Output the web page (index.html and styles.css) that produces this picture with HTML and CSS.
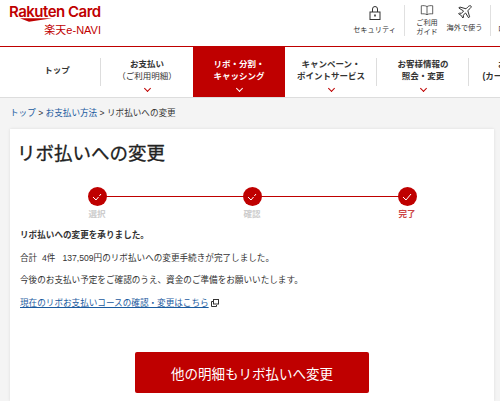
FILE: index.html
```html
<!DOCTYPE html>
<html>
<head>
	<meta charset="utf-8">
	<title>リボ払いへの変更</title>
	<link rel="stylesheet" href="styles.css">
</head>
<body>
	<header class="top">
		<div class="logo">
			<div class="logoMain">Rakuten Card</div>
			<svg class="swoosh" width="32" height="4" viewBox="0 0 32 4"><path d="M0 .3 L32 .3 L9 3.800 Z" fill="#bf0000"/></svg>
			<div class="logoSub">楽天e-NAVI</div>
		</div>
		<ul class="util">
			<li class="utilItem secure">
				<svg width="12" height="14" viewBox="0 0 12 14" fill="none" stroke="#333" stroke-width="1"><rect x="1" y="6" width="10" height="7.500"/><path d="M3.500 6V3a2.500 2.500 0 0 1 5 0v3"/><path d="M6 8.500v2" stroke-width="1.600"/></svg>
				<span>セキュリティ</span>
			</li>
			<li class="utilItem guide">
				<svg width="16" height="13" viewBox="0 0 16 13" fill="none" stroke="#333" stroke-width="1"><path d="M8 2C6 .8 3 .6 .6 1v10.600c2.400-.4 5.400-.2 7.400 1 2-1.200 5-1.400 7.400-1V1C13 .6 10 .8 8 2zM8 2v10.600"/></svg>
				<span>ご利用<br>ガイド</span>
			</li>
			<li class="utilItem abroad">
				<svg width="14" height="14" viewBox="0 0 14 14" fill="none" stroke="#333" stroke-width="1" stroke-linejoin="round"><path d="M13 1c-.8-.6-2-.2-3 .8L8 3.800 1.800 2 .8 3l4.800 3-2.200 2.400-2-.4-.8.8 2.600 1.600 1.600 2.600.8-.8-.4-2L7.600 8l3 4.800 1-1L9.800 5.600l2.200-2c1-1 1.600-2 1-2.600z"/></svg>
				<span>海外で使う</span>
			</li>
			<li class="utilItem logout">
				<span>ログアウト</span>
			</li>
		</ul>
	</header>

	<nav class="nav">
		<a class="navItem first">トップ</a>
		<a class="navItem second">お支払い<br><span class="thin">（ご利用明細）</span><i class="arrow"></i></a>
		<a class="navItem current">リボ・分割・<br>キャッシング<i class="arrow"></i></a>
		<a class="navItem">キャンペーン・<br>ポイントサービス<i class="arrow"></i></a>
		<a class="navItem">お客様情報の<br>照会・変更<i class="arrow"></i></a>
		<a class="navItem last">お申込み<br>(カード追加など)<i class="arrow"></i></a>
	</nav>

	<div class="crumb"><a href="#">トップ</a> &gt; <a href="#">お支払い方法</a> &gt; リボ払いへの変更</div>

	<main class="card">
		<h1>リボ払いへの変更</h1>
		<ol class="steps">
			<li class="step">
				<span class="dot"><svg width="10" height="8" viewBox="0 0 10 8" fill="none" stroke="#fff" stroke-width="1"><path d="M1 4l3 3 5-6"/></svg></span>
				選択
			</li>
			<li class="step">
				<span class="dot"><svg width="10" height="8" viewBox="0 0 10 8" fill="none" stroke="#fff" stroke-width="1"><path d="M1 4l3 3 5-6"/></svg></span>
				確認
			</li>
			<li class="step now">
				<span class="dot"><svg width="10" height="8" viewBox="0 0 10 8" fill="none" stroke="#fff" stroke-width="1"><path d="M1 4l3 3 5-6"/></svg></span>
				完了
			</li>
		</ol>
		<p class="lead">リボ払いへの変更を承りました。</p>
		<p>合計&nbsp; 4件&nbsp;&nbsp; 137,509円のリボ払いへの変更手続きが完了しました。</p>
		<p>今後のお支払い予定をご確認のうえ、資金のご準備をお願いいたします。</p>
		<p><a href="#">現在のリボお支払いコースの確認・変更はこちら</a>
			<svg class="ext" width="8" height="8" viewBox="0 0 8 8" fill="none" stroke="#333" stroke-width="1"><rect x="2.500" y=".5" width="5" height="4.500"/><path d="M2 2.500H.5v5h5V6"/></svg>
		</p>
		<div class="action">
			<button class="btn">他の明細もリボ払いへ変更</button>
		</div>
	</main>
</body>
</html>
```

FILE: styles.css
```css
*{
	box-sizing: border-box;
}
html,body{
	height: 401px;
	overflow: hidden;
}
body{
	margin: 0;
	background-color: #f4f4f4;
	color: #333;
	font-family: "Liberation Sans", "Noto Sans CJK JP", sans-serif;
	font-size: 8.5px;
}
ul,ol{
	list-style: none;
	margin: 0;
	padding: 0;
}
a{
	color: #1a5a9e;
	text-decoration: none;
}

/* header */
.top{
	display: flex;
	justify-content: space-between;
	height: 46px;
	background-color: #fff;
	overflow: hidden;
}
.logo{
	width: 92px;
	margin-left: 9px;
	padding-top: 4px;
	display: flex;
	flex-direction: column;
}
.logoMain{
	color: #bf0000;
	font-family: Inter, "Liberation Sans", sans-serif;
	font-size: 15px;
	font-weight: 600;
	line-height: 15px;
	letter-spacing: -0.5px;
	white-space: nowrap;
}
.swoosh{
	margin-left: 11px;
	margin-top: -1px;
}
.logoSub{
	color: #bf0000;
	font-size: 11px;
	line-height: 13px;
	margin-top: 2px;
	text-align: right;
	white-space: nowrap;
}
.util{
	display: flex;
	width: 155px;
	height: 31px;
	margin-top: 5px;
	flex-shrink: 0;
}
.utilItem{
	display: flex;
	flex-direction: column;
	align-items: center;
	flex: none;
	font-size: 7.2px;
	line-height: 9px;
	text-align: center;
	color: #333;
}
.utilItem.secure{
	width: 60px;
	padding-top: 1px;
	border-right: 1px solid #e0e0e0;
}
.utilItem.secure span{
	margin-top: 5px;
}
.utilItem.guide{
	width: 44px;
}
.utilItem.guide span{
	margin-top: 3px;
}
.utilItem.abroad{
	width: 42px;
	padding-right: 10px;
	border-right: 1px solid #e0e0e0;
}
.utilItem.abroad span{
	margin-top: 4px;
	white-space: nowrap;
}
.utilItem.logout{
	width: 50px;
	padding-top: 19px;
	white-space: nowrap;
}

/* nav */
.nav{
	display: flex;
	height: 52px;
	border-top: 1px solid #bf0000;
	border-bottom: 1px solid #ddd;
	background-color: #fff;
	overflow: hidden;
}
.navItem{
	position: relative;
	flex: none;
	width: 92px;
	height: 50px;
	padding-top: 11px;
	color: #333;
	font-weight: bold;
	line-height: 12px;
	text-align: center;
	white-space: nowrap;
}
.navItem.first{
	width: 101px;
	padding: 17px 0 0 13px;
}
.navItem::after{
	content: "";
	position: absolute;
	right: 0;
	top: 11px;
	height: 28px;
	border-right: 1px solid #ddd;
}
.navItem.current{
	background-color: #bf0000;
	color: #fff;
}
.navItem.current::after,.navItem.second::after{
	display: none;
}
.thin{
	font-weight: normal;
}
.arrow{
	position: absolute;
	left: 50%;
	top: 39px;
	width: 5px;
	height: 5px;
	margin-left: -2.5px;
	border-right: 1.5px solid #bf0000;
	border-bottom: 1.5px solid #bf0000;
	transform: rotate(45deg);
}
.current .arrow{
	border-color: #fff;
}

/* breadcrumb */
.crumb{
	padding: 9px 10px 0;
	height: 31px;
	line-height: 12px;
	font-size: 8.6px;
}

/* card */
.card{
	width: 484px;
	height: 272px;
	margin-left: 10px;
	padding: 0 10px;
	background-color: #fff;
	box-shadow: 0 0 3px rgba(0,0,0,.1);
	overflow: hidden;
}
h1{
	margin: 0 0 0 -3px;
	padding-top: 12px;
	font-size: 18.500px;
	font-weight: normal;
	line-height: 26px;
	color: #222;
	-webkit-text-stroke: .3px #222;
}
.steps{
	display: grid;
	grid-template-columns: repeat(3, 155px);
	margin: 20px 0 0 -0.5px;
}
.step{
	position: relative;
	display: flex;
	flex-direction: column;
	align-items: center;
	color: #ccc;
	font-weight: bold;
	line-height: 12px;
	gap: 2px;
}
.step::before{
	content: "";
	position: absolute;
	top: 9px;
	right: 50%;
	width: 155px;
	border-top: 1px solid #bf0000;
}
.step:first-child::before{
	display: none;
}
.step.now{
	color: #c44;
}
.dot{
	position: relative;
	display: flex;
	align-items: center;
	justify-content: center;
	width: 19px;
	height: 19px;
	border-radius: 50%;
	background-color: #bf0000;
}
p{
	margin: 0;
	height: 22.500px;
	line-height: 22px;
	font-size: 8.6px;
	white-space: nowrap;
}
.lead{
	margin-top: 4px;
	font-weight: bold;
}
p a{
	text-decoration: underline;
}
.ext{
	vertical-align: -1px;
}

.action{
	display: flex;
	justify-content: center;
	padding-top: 38px;
}
.btn{
	width: 234px;
	height: 41px;
	border: none;
	border-radius: 2px;
	background-color: #bf0000;
	color: #fff;
	font-family: inherit;
	font-size: 13.500px;
	cursor: pointer;
}
```
